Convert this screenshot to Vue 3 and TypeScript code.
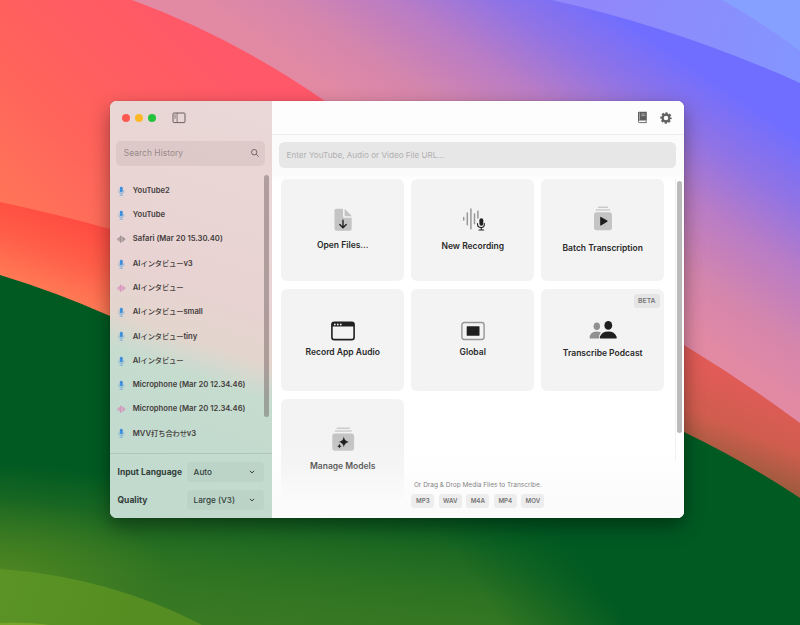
<script setup lang="ts">
interface HistoryItem {
  name: string
  kind: 'mic' | 'wave' | 'wave-grey'
}
interface Action {
  label: string
  icon: 'file' | 'record' | 'batch' | 'app' | 'global' | 'podcast' | 'models'
  beta?: boolean
}

const history: HistoryItem[] = [
  { name: 'YouTube2', kind: 'mic' },
  { name: 'YouTube', kind: 'mic' },
  { name: 'Safari (Mar 20 15.30.40)', kind: 'wave-grey' },
  { name: 'AIインタビューv3', kind: 'mic' },
  { name: 'AIインタビュー', kind: 'wave' },
  { name: 'AIインタビューsmall', kind: 'mic' },
  { name: 'AIインタビューtiny', kind: 'mic' },
  { name: 'AIインタビュー', kind: 'mic' },
  { name: 'Microphone (Mar 20 12.34.46)', kind: 'mic' },
  { name: 'Microphone (Mar 20 12.34.46)', kind: 'wave' },
  { name: 'MVV打ち合わせv3', kind: 'mic' },
]

const actions: Action[] = [
  { label: 'Open Files...', icon: 'file' },
  { label: 'New Recording', icon: 'record' },
  { label: 'Batch Transcription', icon: 'batch' },
  { label: 'Record App Audio', icon: 'app' },
  { label: 'Global', icon: 'global' },
  { label: 'Transcribe Podcast', icon: 'podcast', beta: true },
  { label: 'Manage Models', icon: 'models' },
]

const options = [
  { label: 'Input Language', value: 'Auto' },
  { label: 'Quality', value: 'Large (V3)' },
]

const formats: string[] = ['MP3', 'WAV', 'M4A', 'MP4', 'MOV']

// Splits a title into Latin and Japanese runs so each can be tracked separately.
const runs = (name: string): string[] => name.match(/[\u0000-\u00ff]+|[^\u0000-\u00ff]+/g) ?? []
const isJapanese = (run: string): boolean => run.charCodeAt(0) > 255
</script>

<template>
  <div class="desktop">
    <svg class="wallpaper" viewBox="0 0 800 625" preserveAspectRatio="none" aria-hidden="true">
      <defs>
        <linearGradient id="sky" gradientUnits="userSpaceOnUse" x1="400" y1="137" x2="525" y2="-48">
          <stop offset="0" stop-color="#e289a4" />
          <stop offset="0.22" stop-color="#d586ac" />
          <stop offset="0.5" stop-color="#b97cc5" />
          <stop offset="0.75" stop-color="#9073e5" />
          <stop offset="1" stop-color="#706eff" />
        </linearGradient>
        <linearGradient id="blue" gradientUnits="userSpaceOnUse" x1="600" y1="0" x2="800" y2="60">
          <stop offset="0" stop-color="#9087fa" />
          <stop offset="1" stop-color="#8495ff" />
        </linearGradient>
        <linearGradient id="red" gradientUnits="userSpaceOnUse" x1="190" y1="20" x2="0" y2="215">
          <stop offset="0" stop-color="#ff5869" />
          <stop offset="0.55" stop-color="#ff625b" />
          <stop offset="1" stop-color="#ff7658" />
        </linearGradient>
        <linearGradient id="ember" gradientUnits="userSpaceOnUse" x1="50" y1="208" x2="20" y2="292">
          <stop offset="0" stop-color="#ff4b42" />
          <stop offset="0.45" stop-color="#ff5e48" />
          <stop offset="1" stop-color="#ff8058" />
        </linearGradient>
        <linearGradient id="rust" gradientUnits="userSpaceOnUse" x1="720" y1="370" x2="684" y2="462">
          <stop offset="0" stop-color="#e15b57" />
          <stop offset="0.5" stop-color="#cf5d4e" />
          <stop offset="1" stop-color="#8f5a38" />
        </linearGradient>
        <linearGradient id="meadow" gradientUnits="userSpaceOnUse" x1="200" y1="482" x2="185" y2="625">
          <stop offset="0" stop-color="#005a22" />
          <stop offset="0.3" stop-color="#1c6822" />
          <stop offset="0.6" stop-color="#2e7322" />
          <stop offset="1" stop-color="#3b7a24" />
        </linearGradient>
        <linearGradient id="meadowFade" gradientUnits="userSpaceOnUse" x1="500" y1="620" x2="585" y2="560">
          <stop offset="0" stop-color="#005a22" stop-opacity="0" />
          <stop offset="1" stop-color="#005a22" />
        </linearGradient>
        <linearGradient id="lime" gradientUnits="userSpaceOnUse" x1="0" y1="570" x2="130" y2="625">
          <stop offset="0" stop-color="#5b9425" />
          <stop offset="1" stop-color="#558d22" />
        </linearGradient>
        <radialGradient id="moss" gradientUnits="userSpaceOnUse" cx="0" cy="0" r="1" gradientTransform="translate(0 575) scale(170 75)">
          <stop offset="0" stop-color="#5c8e20" stop-opacity="0.65" />
          <stop offset="1" stop-color="#5c8e20" stop-opacity="0" />
        </radialGradient>
      </defs>
      <rect width="800" height="625" fill="url(#sky)" />
      <path d="M552 0Q680 29 800 83V0Z" fill="url(#blue)" />
      <path d="M722 0Q760 21 800 51V0Z" fill="#86a0ff" />
      <path d="M0 0H132Q231 36 325 101L450 200V330H0Z" fill="url(#red)" />
      <path d="M0 202Q56 214 110 229L300 290V400H0Z" fill="url(#ember)" />
      <path d="M600 285L684 345Q745 382 800 423V540H600Z" fill="url(#rust)" />
      <path d="M0 275Q56 292 110 316L400 440L684 432Q746 462 800 498V625H0Z" fill="#005a22" />
      <rect y="455" width="620" height="170" fill="url(#meadow)" />
      <path d="M400 500H684V625H400Z" fill="url(#meadowFade)" />
      <rect y="500" width="180" height="125" fill="url(#moss)" />
      <path d="M0 569Q110 577 202 625H0Z" fill="url(#lime)" />
      <path d="M0 623Q28 622 50 625H0Z" fill="#76a52a" />
    </svg>

    <main class="window">
      <aside class="sidebar">
        <div class="titlebar">
          <span class="light close"></span>
          <span class="light minimise"></span>
          <span class="light zoom"></span>
          <svg class="toggle" viewBox="0 0 14 12">
            <rect x="1" y="1" width="12" height="9.6" rx="1" />
            <path d="M5.1 1V10.6M2.3 3H3.8M2.3 4.6H3.8M2.3 6.2H3.8" />
          </svg>
        </div>

        <div class="search">
          <span>Search History</span>
          <svg viewBox="0 0 10 10"><circle cx="4.2" cy="4.2" r="2.7" /><path d="M6.2 6.2L8.7 8.7" /></svg>
        </div>

        <ul class="history">
          <li v-for="(item, i) in history" :key="i">
            <svg v-if="item.kind === 'mic'" class="kind mic" viewBox="0 0 10 12">
              <rect x="3.3" y="0.8" width="3.4" height="6.6" rx="1.7" />
              <path d="M2 5.4V6Q2 8.8 5 8.8Q8 8.8 8 6V5.4M5 8.8V10.7M3.4 10.8H6.6" />
            </svg>
            <svg v-else class="kind wave" :class="{ grey: item.kind === 'wave-grey' }" viewBox="0 0 10 12">
              <path d="M1 5.3V6.7M2.6 4V8M4.2 2.3V9.7M5.8 3.1V8.9M7.4 4V8M9 5.3V6.7" />
            </svg>
            <span class="name"><span v-for="(run, r) in runs(item.name)" :key="r" :class="{ ja: isJapanese(run) }">{{ run }}</span></span>
          </li>
        </ul>

        <div class="options">
          <div v-for="option in options" :key="option.label" class="option">
            <label>{{ option.label }}</label>
            <div class="select">
              <span>{{ option.value }}</span>
              <svg viewBox="0 0 6 4"><path d="M0.9 0.9L3 2.9L5.1 0.9" /></svg>
            </div>
          </div>
        </div>
        <i class="thumb"></i>
      </aside>

      <section class="content">
        <header class="toolbar">
          <svg class="book" viewBox="0 0 11 13">
            <path class="solid" d="M2.1 0.8H9.8V9.6H1V1.9Q1 0.8 2.1 0.8Z" />
            <path class="edge" d="M1.5 9V10.8Q1.5 11.6 2.3 11.6H9.6M9.2 9.5V11.5" />
            <path class="mark" d="M2.5 1.6V8.8M4.2 3H8.3M4.2 4.6H8.3" />
          </svg>
          <svg class="gear" viewBox="0 0 14 14">
            <circle class="teeth" cx="7" cy="7" r="4.7" />
            <circle class="ring" cx="7" cy="7" r="3.4" />
          </svg>
        </header>

        <div class="url">Enter YouTube, Audio or Video File URL...</div>

        <div class="grid">
          <button v-for="action in actions" :key="action.label" class="card" :class="action.icon" type="button">
            <span v-if="action.beta" class="beta">BETA</span>
            <svg v-if="action.icon === 'file'" class="icon" viewBox="0 0 24 24">
              <path fill="#c4c4c4" d="M5.3 0.8H12V8.2Q12 9.7 13.5 9.7H20.7V20.7Q20.7 22.8 18.6 22.8H5.6Q3.5 22.8 3.5 20.7V2.6Q3.5 0.8 5.3 0.8Z" />
              <path fill="#c4c4c4" d="M13.6 1Q14 1.1 14.6 1.7L19.8 7Q20.3 7.6 20.5 8.2H14.2Q13.6 8.2 13.6 7.6Z" />
              <path fill="none" stroke="#222" stroke-width="1.4" stroke-linecap="round" stroke-linejoin="round" d="M12 12.3V19.5M8.8 16.6L12 19.8L15.2 16.6" />
            </svg>
            <svg v-else-if="action.icon === 'record'" class="icon" viewBox="0 0 24 24">
              <g fill="none" stroke-linecap="round">
                <path stroke="#989898" stroke-width="1.5" d="M2.7 10.5V13M6.3 6V17.8M9.9 2.1V21.8M13.5 7V16.8M16.9 4.3V11" />
                <rect x="18.4" y="11.3" width="3.9" height="7.4" rx="1.9" fill="#222" />
                <path stroke="#222" stroke-width="1.1" d="M16.4 16.5Q16.4 20.6 20.35 20.6Q23.4 20.6 23.4 16.5M20.3 20.8V22.8M18 23H22.7" />
              </g>
            </svg>
            <svg v-else-if="action.icon === 'batch'" class="icon" viewBox="0 0 24 25">
              <path stroke="#b9b9b9" stroke-width="1" stroke-linecap="round" d="M7.3 1.2H16.7M5.2 4H18.8" />
              <rect x="3" y="6.2" width="18" height="18" rx="2.6" fill="#c4c4c4" />
              <path fill="#1e1e1e" d="M9.2 11.4Q9.2 10.6 10 11L16.2 14.6Q17 15.2 16.2 15.8L10 19.4Q9.2 19.8 9.2 19Z" />
            </svg>
            <svg v-else-if="action.icon === 'app'" class="icon" viewBox="0 0 26 20">
              <rect x="1.9" y="1.4" width="22.2" height="17.2" rx="2.4" fill="none" stroke="#202020" stroke-width="1.6" />
              <path fill="#202020" d="M1.9 5.6V3.5Q1.9 1.4 4.2 1.4H21.8Q24.1 1.4 24.1 3.5V5.6Z" />
              <g fill="#f3f3f3"><circle cx="4.8" cy="3.5" r="0.9" /><circle cx="7.8" cy="3.5" r="0.9" /><circle cx="10.8" cy="3.5" r="0.9" /></g>
            </svg>
            <svg v-else-if="action.icon === 'global'" class="icon" viewBox="0 0 26 20">
              <rect x="1.9" y="1.5" width="22.2" height="17" rx="2.4" fill="none" stroke="#969696" stroke-width="1.4" />
              <rect x="6.7" y="5.3" width="12.8" height="9.4" rx="0.5" fill="#202020" />
            </svg>
            <svg v-else-if="action.icon === 'podcast'" class="icon" viewBox="0 0 28 20">
              <g fill="#909090"><ellipse cx="7.8" cy="6.2" rx="3.2" ry="3.8" /><path d="M0.7 18.6Q0.2 11.6 7.6 11.4Q10 11.4 12 12.6Q9.8 14.5 9.8 18.6Z" /></g>
              <g fill="#1f1f1f"><ellipse cx="19.3" cy="5.4" rx="3.9" ry="4.4" /><path d="M11.4 18.6Q10.3 18.6 11 16.6Q12.8 11.4 19.3 11.4Q25.8 11.4 27.5 16.6Q28.2 18.6 27.1 18.6Z" /></g>
            </svg>
            <svg v-else class="icon" viewBox="0 0 24 25">
              <path stroke="#b9b9b9" stroke-width="1" stroke-linecap="round" d="M6.1 1.2H18.5M4.2 4H20.4" />
              <rect x="1.3" y="6.5" width="21.8" height="17.2" rx="2.6" fill="#c4c4c4" />
              <path fill="#1f1f1f" d="M12.8 9.6Q13.4 14.4 18 14.9Q13.4 15.5 12.8 20.2Q12.2 15.5 7.8 14.9Q12.2 14.4 12.8 9.6ZM8.4 16.8Q8.8 18.9 10.6 19.2Q8.8 19.5 8.4 21.5Q8 19.5 6.2 19.2Q8 18.9 8.4 16.8Z" />
            </svg>
            <span class="caption">{{ action.label }}</span>
          </button>
        </div>

        <i class="track"></i>
        <i class="thumb"></i>
        <footer class="drop">
          <p>Or Drag &amp; Drop Media Files to Transcribe.</p>
          <div class="formats">
            <span v-for="format in formats" :key="format">{{ format }}</span>
          </div>
        </footer>
      </section>
    </main>
  </div>
</template>

<style>
body {
  margin: 0;
  overflow: hidden;
}
</style>

<style scoped>
.desktop {
  position: relative;
  display: flex;
  box-sizing: border-box;
  width: 800px;
  height: 625px;
  padding: 101.4px 116px 107.4px 110px;
  overflow: hidden;
  font-family: Inter, "Noto Sans CJK JP", sans-serif;
  background: #005a22;
}
.wallpaper {
  position: absolute;
  inset: 0;
  width: 800px;
  height: 625px;
}
.window {
  position: relative;
  display: grid;
  grid-template-columns: 161.6px 1fr;
  flex: 1;
  overflow: hidden;
  border-radius: 6.5px;
  background: #fff;
  box-shadow: 0 0 1px rgba(0, 0, 0, 0.4), 0 8px 20px rgba(0, 0, 0, 0.4);
}
.sidebar {
  position: relative;
  display: flex;
  flex-direction: column;
  min-height: 0;
  background: linear-gradient(199deg, #e9d8d7 0%, #e8d3d2 44%, #e3d5cd 56%, #c5dccf 64%, #c0dacd 100%);
}
.titlebar {
  display: flex;
  align-items: center;
  box-sizing: border-box;
  height: 33.6px;
  padding-left: 12.2px;
  gap: 5px;
}
.light {
  width: 8px;
  height: 8px;
  border-radius: 50%;
}
.close { background: #fe5951; }
.minimise { background: #fdb827; }
.zoom { background: #25c33b; }
.toggle {
  width: 14px;
  height: 12px;
  margin-left: 10.5px;
  fill: none;
  stroke: #6b5e5f;
  stroke-width: 1;
}
.toggle path { stroke-width: 0.8; }
.search {
  display: flex;
  align-items: center;
  justify-content: space-between;
  box-sizing: border-box;
  height: 25px;
  margin: 6px 7px 0 6.3px;
  padding: 0 4.5px 0 7.5px;
  border-radius: 5px;
  color: #988a8a;
  font-size: 8.4px;
  letter-spacing: 0.06px;
  background: rgba(110, 70, 70, 0.085);
}
.search svg {
  width: 10px;
  height: 10px;
  fill: none;
  stroke: #6a5e5e;
  stroke-width: 0.9;
}
.history {
  flex: 1;
  margin: 0;
  padding: 12.8px 0 0 7px;
  list-style: none;
}
.history li {
  display: flex;
  align-items: center;
  height: 24.27px;
  gap: 7.2px;
}
.kind {
  width: 8.6px;
  height: 10.4px;
  fill: none;
  stroke-linecap: round;
}
.mic {
  stroke: #7cafd9;
  stroke-width: 0.9;
}
.mic rect {
  fill: #3f8fdb;
  stroke: none;
}
.wave {
  stroke: #d683b8;
  stroke-width: 1;
}
.wave.grey { stroke: #887d7d; }
.name {
  color: #443c3c;
  font-size: 7.66px;
  font-weight: 600;
  line-height: 12px;
  white-space: nowrap;
}
.ja {
  font-size: 7.3px;
  font-weight: 500;
  letter-spacing: -0.15px;
}
.options {
  display: flex;
  flex-direction: column;
  box-sizing: border-box;
  height: 64.5px;
  padding: 7.6px 8px 7px 7.5px;
  gap: 7px;
  border-top: 1px solid rgba(90, 110, 100, 0.18);
}
.option {
  display: flex;
  align-items: center;
  justify-content: space-between;
  height: 21px;
}
.option label {
  color: #33403b;
  font-size: 8.5px;
  font-weight: 700;
}
.select {
  display: flex;
  align-items: center;
  justify-content: space-between;
  box-sizing: border-box;
  width: 77px;
  height: 20px;
  padding: 0 9px 0 7px;
  border-radius: 4px;
  color: #33403b;
  font-size: 8.2px;
  font-weight: 500;
  background: rgba(80, 110, 95, 0.06);
}
.select svg {
  width: 6px;
  height: 4px;
  fill: none;
  stroke: #33403b;
  stroke-width: 1;
}
.sidebar .thumb {
  position: absolute;
  top: 74px;
  right: 2.5px;
  width: 5px;
  height: 242px;
  border-radius: 2.5px;
  background: rgba(95, 80, 82, 0.42);
}
.content {
  position: relative;
  display: flex;
  flex-direction: column;
  min-width: 0;
  min-height: 0;
  background: linear-gradient(#fbfbfb 0 72px, #fff 80px);
}
.toolbar {
  display: flex;
  align-items: center;
  justify-content: flex-end;
  box-sizing: border-box;
  height: 34px;
  padding-right: 10.6px;
  gap: 11px;
  border-bottom: 1px solid #eee;
  background: #fdfdfd;
}
.book {
  width: 11px;
  height: 13px;
}
.solid { fill: #5d5d5d; }
.edge {
  fill: none;
  stroke: #5d5d5d;
  stroke-width: 0.9;
}
.mark {
  fill: none;
  stroke: #d2d2d2;
  stroke-width: 0.6;
}
.gear {
  width: 14px;
  height: 14px;
  fill: none;
  stroke: #606060;
}
.teeth {
  stroke-width: 2;
  stroke-dasharray: 2.2 1.491;
  stroke-dashoffset: 1.1;
}
.ring { stroke-width: 2.2; }
.url {
  display: flex;
  align-items: center;
  flex: none;
  box-sizing: border-box;
  height: 26px;
  margin: 7px 8px 0 7.5px;
  padding-left: 7.5px;
  border-radius: 5.5px;
  color: #b0b0b0;
  font-size: 8.05px;
  letter-spacing: 0.03px;
  background: #e7e7e7;
}
.grid {
  display: grid;
  grid-template-columns: repeat(3, 122.5px);
  grid-auto-rows: 102px;
  gap: 8px 7.5px;
  margin: 11.1px 0 0 9.9px;
}
.card {
  position: relative;
  display: flex;
  flex-direction: column;
  align-items: center;
  min-width: 0;
  padding: 29px 0 0;
  border: 0;
  border-radius: 6px;
  color: #2a2a2a;
  font-family: inherit;
  background: #f3f3f3;
}
.icon {
  width: 24px;
  height: 24px;
}
.caption {
  margin-top: 6.3px;
  font-size: 8.5px;
  font-weight: 600;
  line-height: 12px;
  white-space: nowrap;
}
.record { padding-top: 27.3px; }
.record .caption { margin-top: 9.3px; }
.batch { padding-top: 26.8px; }
.batch .icon { height: 25px; }
.batch .caption { margin-top: 10.5px; }
.app, .global { padding-top: 31.5px; }
.app .icon, .global .icon {
  width: 26px;
  height: 20px;
}
.app .caption, .global .caption { margin-top: 5.5px; }
.podcast { padding-top: 30.5px; }
.podcast .icon {
  width: 28px;
  height: 20px;
}
.podcast .caption { margin-top: 7.2px; }
.models { padding-top: 27.5px; }
.models .icon { height: 25px; }
.models .caption { margin-top: 8.5px; }
.beta {
  position: absolute;
  top: 4.5px;
  right: 4px;
  padding: 0 4.5px;
  border-radius: 3px;
  color: #777;
  font-size: 6.8px;
  font-weight: 600;
  line-height: 14px;
  background: #e5e5e5;
}
.track {
  position: absolute;
  top: 78px;
  right: 8px;
  width: 1px;
  height: 282px;
  background: #f0f0f0;
}
.content .thumb {
  position: absolute;
  top: 80px;
  right: 2px;
  width: 5px;
  height: 252px;
  border-radius: 2.5px;
  background: #bbb;
}
.drop {
  position: absolute;
  right: 0;
  bottom: 0;
  left: 0;
  display: flex;
  flex-direction: column;
  align-items: center;
  box-sizing: border-box;
  height: 75px;
  padding-top: 37px;
  background: linear-gradient(rgba(251, 251, 251, 0), rgba(251, 251, 251, 0.25) 33%, rgba(251, 251, 251, 0.65) 55%, #fbfbfb 84%);
}
.drop p {
  margin: 0;
  color: #858585;
  font-size: 6.5px;
  line-height: 10px;
}
.formats {
  display: flex;
  margin-top: 4px;
  gap: 4.5px;
}
.formats span {
  box-sizing: border-box;
  width: 23px;
  border-radius: 3px;
  color: #747474;
  font-size: 6.2px;
  font-weight: 600;
  line-height: 14px;
  text-align: center;
  background: #ededed;
}
</style>
